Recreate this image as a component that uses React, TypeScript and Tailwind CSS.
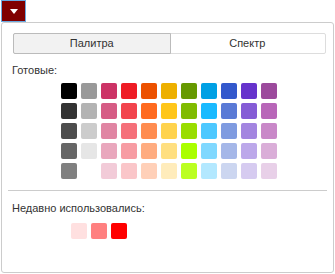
const palette: string[][] = [
  ['#000000', '#999999', '#cc3366', '#ee1c25', '#ec5100', '#edb000', '#669900', '#00a0e4', '#3358cc', '#6633cc', '#9c4a9c'],
  ['#333333', '#b3b3b3', '#d65c85', '#f2444d', '#ff6a1f', '#ffc61a', '#80bb00', '#1abaff', '#5a7ad6', '#855cd6', '#b866b8'],
  ['#4d4d4d', '#cccccc', '#e085a3', '#f5707a', '#ff8c50', '#ffd34d', '#99dd00', '#4dc8ff', '#7f9be0', '#a385e0', '#c988c8'],
  ['#666666', '#e6e6e6', '#e9a7bd', '#f79ca3', '#ffac80', '#ffdf80', '#aaff00', '#80d8ff', '#a5b7e8', '#bca8ea', '#daaed8'],
  ['#808080', '#ffffff', '#f2cbd8', '#fac6c9', '#ffd0b8', '#ffecbb', '#bbff22', '#b3e8ff', '#ccd6f0', '#d6cbf0', '#e8d0e8'],
];

const recent = ['#ffe0e0', '#ff8080', '#ff0000'];

export default function App() {
  return (
    <div className="relative w-[335px] h-[274px] bg-white font-['Liberation_Sans',Arial,sans-serif] text-[11px] text-[#333]">
      {/* Trigger */}
      <button className="ml-[1px] flex h-[22px] w-[25px] items-center justify-center border border-[#6aa9e0] bg-[#800000]">
        <svg width="8" height="5" viewBox="0 0 8 5">
          <path d="M0 0 H8 L4 5 Z" fill="#fff" />
        </svg>
      </button>

      {/* Popup */}
      <div className="mx-[1px] h-[251px] rounded-[3px] border border-[#cccccc] bg-white">
        <div className="ml-[11px] mr-[7px] mt-[10px] flex h-[21px] rounded-[2px] border border-[#dddddd]">
          <div className="flex flex-1 items-center justify-center border border-[#bbbbbb] bg-[#f2f2f2] -m-px rounded-l-[2px]">
            Палитра
          </div>
          <div className="flex flex-1 items-center justify-center">Спектр</div>
        </div>

        <div className="ml-[10px] mt-[9px] leading-[14px]">Готовые:</div>

        <div className="ml-[59px] mt-[6px] grid grid-cols-[repeat(11,16px)] gap-[4px]">
          {palette.flat().map((c, i) => (
            <div key={i} className="h-4 w-4 rounded-[2px]" style={{ backgroundColor: c }} />
          ))}
        </div>

        <div className="mx-[6px] mt-[11px] h-px bg-[#cccccc]" />

        <div className="ml-[10px] mt-[10px] leading-[14px]">Недавно использовались:</div>

        <div className="ml-[69px] mt-[8px] flex gap-[4px]">
          {recent.map((c) => (
            <div key={c} className="h-4 w-4 rounded-[2px]" style={{ backgroundColor: c }} />
          ))}
        </div>
      </div>
    </div>
  );
}
